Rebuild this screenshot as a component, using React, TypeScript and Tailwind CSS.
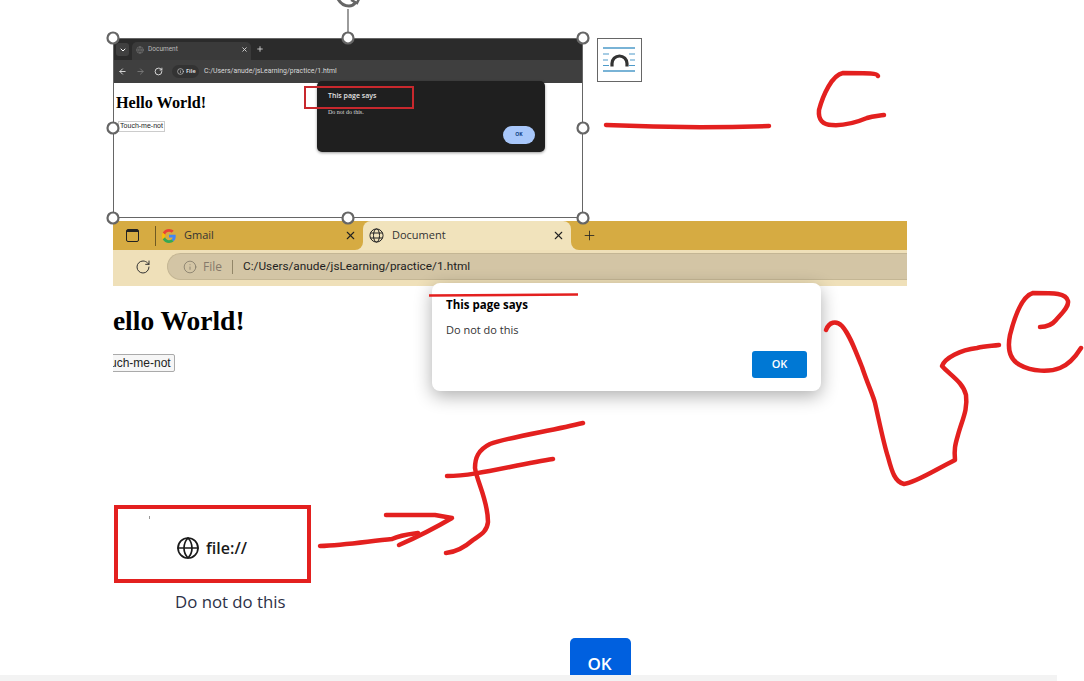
import { ChevronDown, Globe, Info, Plus, RotateCw, X, ArrowLeft, ArrowRight } from "lucide-react";

const sans = "font-['Open_Sans','Liberation_Sans',sans-serif]";
const URL_TEXT = "C:/Users/anude/jsLearning/practice/1.html";

const handles = [
  [113, 38],
  [348, 38],
  [583, 38],
  [113, 128],
  [583, 128],
  [113, 218],
  [348, 218],
  [583, 218],
];

const strokes = [
  // dash + first C
  "M606 125 C650 127 710 128 769 126",
  "M878 76 C877 73 870 73 843 73 C832 75 823 95 819 110 C818 120 823 125 832 125 C845 126 855 123 867 118 C873 116 878 116 884 115",
  // long squiggle + second C
  "M826 330 C829 322 836 320 842 326 C850 335 855 350 862 367 C868 385 873 395 875 403 C880 425 884 445 888 457 C892 472 895 482 904 484 C915 483 935 470 955 460 C954 450 955 445 958 435 C962 420 968 410 966 395 C963 382 950 375 942 366 C945 358 960 350 977 348 C985 346 992 346 999 345",
  "M1040 327 C1047 327 1052 325 1056 320 C1062 313 1069 307 1068 301 C1066 293 1055 293 1033 293 C1022 296 1015 315 1010 335 C1007 350 1010 360 1020 365 C1032 372 1050 372 1060 368 C1070 364 1076 356 1081 348",
  // f shape + arrow
  "M583 423 C550 431 505 438 490 444 C478 450 475 458 475 468 C477 482 488 500 488 522 C487 532 480 535 473 540 C465 547 457 552 446 553",
  "M447 476 C465 476 485 472 510 467 C525 464 540 461 553 459",
  "M320 546 C345 545 370 541 392 539 C400 535 410 534 418 533",
  "M399 545 C415 538 435 528 452 518 L435 515 C420 515 400 515 386 515",
];

function TabGlobe() {
  return (
    <svg width="15" height="15" viewBox="0 0 24 24" fill="none" stroke="#222" strokeWidth="1.6" className="shrink-0">
      <circle cx="12" cy="12" r="10.5" />
      <ellipse cx="12" cy="12" rx="4.8" ry="10.5" />
      <path d="M2.5 8h19M2.5 16h19" />
    </svg>
  );
}

function GoogleG() {
  return (
    <svg width="14" height="14" viewBox="0 0 48 48" className="shrink-0">
      <path fill="#EA4335" d="M24 9.5c3.5 0 6.700 1.200 9.200 3.600l6.900-6.900C35.900 2.400 30.500 0 24 0 14.600 0 6.500 5.400 2.600 13.200l8 6.200C12.500 13.700 17.800 9.500 24 9.500z" />
      <path fill="#4285F4" d="M47 24.500c0-1.600-.1-3.100-.4-4.500H24v9h12.900c-.6 3-2.200 5.500-4.700 7.200l7.700 6C44.400 37.900 47 31.800 47 24.500z" />
      <path fill="#FBBC05" d="M10.600 28.600c-.5-1.400-.8-3-.8-4.600s.3-3.200.8-4.600l-8-6.200C.9 16.500 0 20.100 0 24s.9 7.500 2.600 10.800l8-6.200z" />
      <path fill="#34A853" d="M24 48c6.500 0 11.900-2.100 15.900-5.800l-7.700-6c-2.200 1.400-4.900 2.300-8.200 2.300-6.200 0-11.500-4.200-13.400-9.900l-8 6.200C6.500 42.600 14.600 48 24 48z" />
    </svg>
  );
}

function SmallShot() {
  return (
    <div className="absolute left-[113px] top-[38px] flex h-[180px] w-[470px] flex-col border border-[#666] bg-white">
      <div className="flex h-[21px] items-end bg-[#2b2b2b] pl-[2px]">
        <div className="mb-[4px] flex h-[13px] w-[13px] items-center justify-center rounded-[3px] bg-[#404040] text-white">
          <ChevronDown size={8} strokeWidth={3} />
        </div>
        <div className={`ml-[3px] flex h-[18px] w-[119px] items-center rounded-t-[5px] bg-[#3a3a3a] pb-[3px] pl-[4px] pr-[3px] ${sans}`}>
          <Globe size={8} className="text-[#777]" />
          <span className="ml-[4px] flex-1 font-['Roboto',sans-serif] text-[6.500px] text-[#bbb]">Document</span>
          <X size={7} strokeWidth={3} className="text-[#ddd]" />
        </div>
        <Plus size={8} strokeWidth={2.500} className="mb-[7px] ml-[5px] text-[#ddd]" />
      </div>
      <div className={`flex h-[23px] items-center bg-[#3f3f3f] pl-[4px] ${sans}`}>
        <ArrowLeft size={9} strokeWidth={2.500} className="text-[#ddd]" />
        <ArrowRight size={9} strokeWidth={2.500} className="ml-[9px] text-[#777]" />
        <RotateCw size={9} strokeWidth={2.500} className="ml-[9px] text-[#ddd]" />
        <div className="ml-[9px] flex h-[13px] w-[27px] items-center gap-[2px] rounded-full bg-[#333] pl-[5px]">
          <Info size={7} className="text-[#ddd]" />
          <span className="text-[5.500px] font-bold text-[#ddd]">File</span>
        </div>
        <span className="ml-[5px] font-['Roboto',sans-serif] text-[6.900px] text-[#d8d8d8]">{URL_TEXT}</span>
      </div>
      <div className="flex flex-col items-start pl-[2px]">
        <h1 className="mt-[9px] font-['Liberation_Serif',serif] text-[16.200px] font-bold leading-[22px] text-black">Hello World!</h1>
        <div className="mt-[7px] ml-[2px] flex h-[11px] w-[47px] items-center justify-center border border-[#ccc] font-['Liberation_Sans',sans-serif] text-[7px] text-[#222]">
          Touch-me-not
        </div>
      </div>
      {/* dialog over the page */}
      <div className={`absolute left-[203px] top-[42px] flex h-[71px] w-[228px] flex-col rounded-[5px] bg-[#1f1f1f] pl-[11px] pr-[10px] pt-[9px] shadow-[0_1px_3px_rgba(0,0,0,0.4)] ${sans}`}>
        <span className="text-[7px] font-semibold leading-[12px] text-[#e3e3e3]">This page says</span>
        <span className="mt-[6px] font-['Liberation_Serif',serif] text-[6px] leading-[8px] text-[#ddd]">Do not do this.</span>
        <div className="mt-[10px] flex h-[18px] w-[32px] items-center justify-center self-end rounded-full bg-[#a8c7fa] text-[5px] font-bold text-[#0b3a80]">OK</div>
      </div>
      <div className="absolute left-[190px] top-[47px] h-[23px] w-[110px] border-2 border-[#c8282d]" />
    </div>
  );
}

function LargeShot() {
  return (
    <div className={`absolute left-[113px] top-[221px] h-[160px] w-[794px] overflow-hidden ${sans}`}>
      <div className="flex h-[29px] bg-[#f1e3bc] text-[11px] text-[#333]">
        <div className="flex w-[250px] items-center rounded-br-lg bg-[#d6ab42]">
          <div className="ml-[13px] flex h-[13px] w-[13px] flex-col rounded-[2px] border-[1.500px] border-[#222]">
            <div className="h-[2px] bg-[#222]" />
          </div>
          <div className="ml-[16px] h-[20px] w-px bg-[#6f5a22]" />
          <div className="ml-[6px]"><GoogleG /></div>
          <span className="ml-[8px] flex-1">Gmail</span>
          <X size={13} className="mr-[6px] text-[#222]" />
        </div>
        <div className="w-[208px] bg-[#d6ab42]">
          <div className="flex h-full items-center rounded-t-lg bg-[#f1e3bc] pl-[6px] pr-[6px]">
            <TabGlobe />
            <span className="ml-[8px] flex-1">Document</span>
            <X size={13} className="text-[#222]" />
          </div>
        </div>
        <div className="flex flex-1 items-center rounded-bl-lg bg-[#d6ab42] pl-[11px]">
          <Plus size={15} strokeWidth={1.300} className="text-[#222]" />
        </div>
      </div>
      <div className="flex h-[36px] items-start bg-[#efe0b9] pl-[22px] pt-[3px]">
        <RotateCw size={16} strokeWidth={1.500} className="mt-[6px] text-[#333]" />
        <div className="ml-[16px] flex h-[27px] flex-1 items-center rounded-l-full border-y border-l border-[#c4b694] bg-[#d3c5a5] pl-[15px]">
          <Info size={14} strokeWidth={1.300} className="text-[#7c7464]" />
          <span className="ml-[6px] text-[12px] text-[#85796a]">File</span>
          <div className="ml-[10px] h-[14px] w-px bg-[#928668]" />
          <span className="ml-[10px] font-['Roboto',sans-serif] text-[11.800px] text-[#1e1e1e]">{URL_TEXT}</span>
        </div>
      </div>
      <div className="flex flex-col items-start">
        <div className="ml-[-21.500px] mt-[19px] whitespace-nowrap font-['Liberation_Serif',serif] text-[27.500px] font-bold leading-[32px] text-black">Hello World!</div>
        <div className="ml-[-20px] mt-[17px] flex h-[18px] w-[82px] items-center justify-center rounded-[2px] border border-[#aaa] bg-[#f6f6f6] font-['Liberation_Sans',sans-serif] text-[12px] text-[#222]">
          Touch-me-not
        </div>
      </div>
    </div>
  );
}

export default function App() {
  return (
    <div className="relative h-[681px] w-[1084px] overflow-hidden bg-white">
      <SmallShot />
      <LargeShot />

      {/* layout options button */}
      <div className="absolute left-[597px] top-[38px] h-[44px] w-[45px] border border-[#666] bg-white">
        <svg width="43" height="42" viewBox="0 0 43 42" fill="none">
          <path d="M5 9h32M5 32h32" stroke="#4e9ac9" strokeWidth="1.400" />
          <path d="M5 15h6M5 21h5M5 26.500h6M31 15h6M32 21h5M31 26.500h6" stroke="#4e9ac9" strokeWidth="1.200" />
          <path d="M14 27.500v-3a7.500 7.500 0 0 1 15 0v3" stroke="#333" strokeWidth="3.200" />
        </svg>
      </div>

      {/* big alert */}
      <div className={`absolute left-[432px] top-[283px] flex h-[108px] w-[389px] flex-col rounded-lg bg-white px-[14px] pt-[13px] shadow-[0_5px_18px_rgba(0,0,0,0.32)] ${sans}`}>
        <span className="text-[11.500px] font-bold leading-[17px] text-black">This page says</span>
        <span className="mt-[8px] text-[11px] leading-[17px] text-[#333]">Do not do this</span>
        <div className="mt-[13px] flex h-[27px] w-[55px] items-center justify-center self-end rounded-[3px] bg-[#0078d4] text-[11px] font-semibold text-white">OK</div>
      </div>

      {/* file:// card */}
      <div className={`absolute left-[114px] top-[505px] flex h-[78px] w-[197px] items-center justify-center gap-[6px] border-[4px] border-[#e3201f] pr-[2px] pt-[7px] ${sans}`}>
        <Globe size={24} strokeWidth={1.700} className="text-[#1a1a1a]" />
        <span className="text-[16px] font-semibold text-[#1a1a1a]">file://</span>
      </div>
      <div className="absolute left-[149px] top-[516px] h-[3px] w-px bg-[#999]" />
      <span className={`absolute left-[175px] top-[590px] text-[16.800px] leading-[24px] text-[#2c3147] ${sans}`}>Do not do this</span>

      <div className={`absolute left-[570px] top-[638px] flex h-[50px] w-[61px] justify-center rounded-[5px] bg-[#0060df] pr-[2px] pt-[14px] text-[17px] font-semibold leading-[24px] text-white ${sans}`}>OK</div>
      <div className="absolute bottom-0 left-0 h-[6px] w-[1057px] bg-[#f3f3f3]" />

      {/* ink and selection handles */}
      <svg className="pointer-events-none absolute inset-0" width="1084" height="681" fill="none">
        <path d="M348 9v29" stroke="#666" strokeWidth="1.300" />
        <path d="M337 -3Q341 6 349 6Q353 6 356 2" stroke="#666" strokeWidth="3" />
        <path d="M351 0l6 3 3-6" stroke="#666" strokeWidth="2.500" />
        {strokes.map((d, i) => (
          <path key={i} d={d} stroke="#e3201f" strokeWidth="4.500" strokeLinecap="round" strokeLinejoin="round" />
        ))}
        <path d="M429 295.500 C480 295 530 295 578 294.500" stroke="#e3201f" strokeWidth="2.500" />
        {handles.map(([cx, cy]) => (
          <circle key={`${cx}-${cy}`} cx={cx} cy={cy} r="5.500" fill="#fff" stroke="#666" strokeWidth="2.200" />
        ))}
      </svg>
    </div>
  );
}
